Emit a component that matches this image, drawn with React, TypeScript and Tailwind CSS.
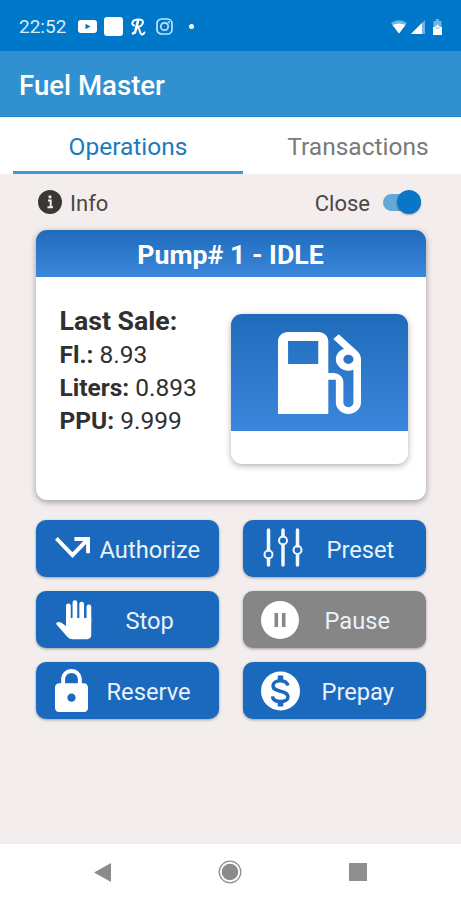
import type { ReactNode } from 'react'
import clsx from 'clsx'

function StatusBar() {
  return (
    <div className="flex h-[51px] items-center justify-between bg-[#0078c9] pt-[2px] pr-[18px] pl-[19px] text-white">
      <div className="flex items-center">
        <span className="w-[59px] text-[19px] leading-none text-[#d8ecf9]">22:52</span>
        <svg width="19" height="13" viewBox="0 0 19 13">
          <rect width="19" height="13" rx="3" fill="#fff" />
          <path d="M7.5 3.7v5.6l5-2.8z" fill="#0078c9" />
        </svg>
        <div className="ml-[7px] size-[19px] rounded-[3px] bg-white" />
        <svg className="ml-[8px]" width="15" height="18" viewBox="0 0 15 18" fill="none" stroke="#fff" strokeLinecap="round">
          <path d="M3 7.5C0 6.5 1 2.5 5 1.8C10 .8 12.5 2 11.8 5C11 8 8 9 5.5 9" strokeWidth="2" />
          <path d="M7 3L4 14.5M2 15.5L4 14" strokeWidth="2.6" />
          <path d="M6.5 9.5C9 9.5 8.5 16.5 11 16.5C12 16.5 13 15.5 13.5 14.5" strokeWidth="2" />
        </svg>
        <svg className="ml-[10px]" width="17" height="17" viewBox="0 0 17 17" fill="none" stroke="#c6e2f5" strokeWidth="1.7">
          <rect x="1" y="1" width="15" height="15" rx="4.5" />
          <circle cx="8.5" cy="8.5" r="3.7" />
          <circle cx="12.7" cy="4.3" r=".4" />
        </svg>
        <div className="ml-[16px] size-[5px] rounded-full bg-white" />
      </div>
      <div className="flex items-center">
        <svg width="16" height="14" viewBox="0 0 16 14">
          <path d="M0 3Q8-2.5 16 3L8 13.5z" fill="#70b4e2" />
          <path d="M1.5 5Q8 1.8 14.5 5L8 13.5z" fill="#fff" />
        </svg>
        <svg className="ml-[4px]" width="14" height="14" viewBox="0 0 14 14">
          <path d="M0 14L14 0v14z" fill="#70b4e2" />
          <path d="M0 14L11 3V14z" fill="#fff" />
        </svg>
        <svg className="mr-px ml-[8px]" width="9" height="16" viewBox="0 0 9 16">
          <path d="M3 0h3v2h2.5v6h-8V2H3z" fill="#70b4e2" />
          <path d="M0 8h2L4.5 5.5 7 8h2v8H0z" fill="#fff" />
          <path d="M2.5 9h4" stroke="#70b4e2" />
        </svg>
      </div>
    </div>
  )
}

function PumpIcon() {
  return (
    <svg width="83" height="82" viewBox="4 3 16.5 18" preserveAspectRatio="none" fill="#fff">
      <path d="M19.77 7.23l.01-.01-3.72-3.72L15 4.56l2.11 2.11c-.94.36-1.61 1.26-1.61 2.33 0 1.38 1.12 2.5 2.5 2.5.36 0 .69-.08 1-.21v7.21c0 .55-.45 1-1 1s-1-.45-1-1V14c0-1.1-.9-2-2-2h-1V5c0-1.1-.9-2-2-2H6c-1.1 0-2 .9-2 2v16h10v-7.5h1.5v5c0 1.38 1.12 2.5 2.5 2.5s2.5-1.12 2.5-2.5V9c0-.69-.28-1.32-.73-1.77zM12 10H6V5h6v5zm6 0c-.55 0-1-.45-1-1s.45-1 1-1 1 .45 1 1-.45 1-1 1z" />
    </svg>
  )
}

function AuthorizeIcon() {
  return (
    <svg width="35" height="21" viewBox="3 7 18 10.41" preserveAspectRatio="none" fill="#fff">
      <path d="M3 8.41l9 9 7-7V15h2V7h-8v2h4.59L12 14.59 4.41 7 3 8.41z" />
    </svg>
  )
}

function PresetIcon() {
  return (
    <svg width="40" height="39" viewBox="0 0 40 39" fill="none" stroke="#f2f8fd" strokeLinecap="round">
      <path d="M5.5 2v20M5.5 31v6M20 2v6M20 17v20M34.5 2v16M34.5 27v10" strokeWidth="3.5" />
      <circle cx="5.5" cy="26.5" r="4" strokeWidth="2" />
      <circle cx="20" cy="12.5" r="4" strokeWidth="2" />
      <circle cx="34.5" cy="22" r="4" strokeWidth="2" />
    </svg>
  )
}

function StopIcon() {
  return (
    <svg width="36" height="40" viewBox="0 0 36 40" fill="#fff">
      <path d="M12.4 5.8V22M18.9 2.7V22M25.7 4V22M32.9 6.8V22" stroke="#fff" strokeWidth="4.7" strokeLinecap="round" />
      <path d="M10.05 18H35.25V34.5Q35.25 39.3 30.5 39.3H16.5Q13.5 39.3 11.5 37L.5 24.5Q-.3 23.2 1 22.5Q3 21.4 5 22.6L10.05 26z" />
    </svg>
  )
}

function PauseIcon() {
  return (
    <svg width="38" height="38" viewBox="0 0 38 38">
      <circle cx="19" cy="19" r="19" fill="#fff" />
      <path d="M15.3 12v14M22.7 12v14" stroke="#868686" strokeWidth="3.6" />
    </svg>
  )
}

function ReserveIcon() {
  return (
    <svg width="33" height="43" viewBox="4 1 16 21" preserveAspectRatio="none" fill="#fff">
      <path d="M18 8h-1V6c0-2.76-2.24-5-5-5S7 3.24 7 6v2H6c-1.1 0-2 .9-2 2v10c0 1.1.9 2 2 2h12c1.1 0 2-.9 2-2V10c0-1.1-.9-2-2-2zm-6 9c-1.1 0-2-.9-2-2s.9-2 2-2 2 .9 2 2-.9 2-2 2zm3.1-9H8.9V6c0-1.71 1.39-3.1 3.1-3.1 1.71 0 3.1 1.39 3.1 3.1v2z" />
    </svg>
  )
}

function PrepayIcon() {
  return (
    <svg width="39" height="40" viewBox="0 0 39 40" fill="none" stroke="#1b69bd">
      <circle cx="19.5" cy="20" r="19.5" fill="#fff" stroke="none" />
      <path d="M27 14.5C26 11 23 9.7 19.5 9.7C15 9.7 12 11.7 12 14.8C12 18 14.5 19 19.5 20.2C24.5 21.3 27 22.7 27 25.7C27 28.7 24 30.5 19.5 30.5C15 30.5 12 28.7 11.3 25.3" strokeWidth="3.5" />
      <path d="M19.5 4.5v5M19.5 30.5v5" strokeWidth="5.5" />
    </svg>
  )
}

type Action = { label: string; icon: ReactNode; iconClass: string; labelClass: string; disabled?: boolean }

const actions: Action[] = [
  { label: 'Authorize', icon: <AuthorizeIcon />, iconClass: 'pl-[19px] -mt-[3px]', labelClass: 'w-[100px]' },
  { label: 'Preset', icon: <PresetIcon />, iconClass: 'pl-[20px] -mt-[2px]', labelClass: 'w-[68px] mr-[12px]' },
  { label: 'Stop', icon: <StopIcon />, iconClass: 'pl-[20px]', labelClass: 'w-[49px] mr-[25px]' },
  { label: 'Pause', icon: <PauseIcon />, iconClass: 'pl-[18px]', labelClass: 'w-[66px] mr-[16px]', disabled: true },
  { label: 'Reserve', icon: <ReserveIcon />, iconClass: 'pl-[19px]', labelClass: 'w-[84px] mr-[9px]' },
  { label: 'Prepay', icon: <PrepayIcon />, iconClass: 'pl-[18px]', labelClass: 'w-[72px] mr-[13px]' },
]

function PumpCard() {
  return (
    <div className="mx-auto mt-[2px] h-[270px] w-[390px] overflow-hidden rounded-[11px] bg-white shadow-[0_2px_6px_rgba(0,0,0,0.35)]">
      <div className="flex h-[47px] items-center justify-center bg-linear-to-b from-[#1f6bbb] to-[#3b87dc] pt-[3px] text-[26.7px] font-bold text-white">
        Pump# 1 - IDLE
      </div>
      <div className="flex justify-between pr-[18px] pl-[24px]">
        <div className="pt-[28px] text-[24.5px] leading-[33px] whitespace-nowrap text-[#303030]">
          <div className="text-[26.7px] font-bold">Last Sale:</div>
          <div><b>Fl.:</b> 8.93</div>
          <div><b>Liters:</b> 0.893</div>
          <div><b>PPU:</b> 9.999</div>
        </div>
        <div className="mt-[37px] h-[150px] w-[177px] overflow-hidden rounded-[11px] bg-white shadow-[0_2px_6px_rgba(0,0,0,0.3)]">
          <div className="flex h-[117px] items-center justify-center bg-linear-to-b from-[#1f6bbb] to-[#3b87dc]">
            <PumpIcon />
          </div>
        </div>
      </div>
    </div>
  )
}

export default function App() {
  return (
    <div className="flex h-[900px] w-[461px] flex-col overflow-hidden bg-[#f3eded] font-['Roboto',sans-serif]">
      <StatusBar />
      <div className="flex h-[66px] items-center border-b border-[#2a83c4] bg-[#3090d0] pt-[5px] pl-[19px] text-[27.6px] font-medium text-white">
        Fuel Master
      </div>
      <div className="flex h-[57px] bg-white pl-[13px] text-[24.5px] whitespace-nowrap">
        <div className="flex w-[230px] shrink-0 items-center justify-center border-b-[3px] border-[#4398cf] pt-[6px] text-[#1c7bbd]">
          Operations
        </div>
        <div className="flex w-[230px] shrink-0 items-center justify-center border-b-[3px] border-white pt-[6px] text-[#7a7a7a]">
          Transactions
        </div>
      </div>
      <div className="flex h-[54px] items-center justify-between pt-[2px] pr-[40px] pl-[38px] text-[22px] text-[#4a4646]">
        <div className="flex items-center">
          <svg width="24" height="24" viewBox="0 0 24 24">
            <circle cx="12" cy="12" r="12" fill="#3b3737" />
            <path d="M10 10.5h2.7V17M9.5 17.2h5.5" fill="none" stroke="#f3eded" strokeWidth="2" />
            <rect x="10.6" y="5.5" width="2.8" height="2.8" fill="#f3eded" />
          </svg>
          <span className="mt-[2px] ml-[8px]">Info</span>
        </div>
        <div className="flex items-center">
          <span className="mt-[2px] mr-[13px]">Close</span>
          <div className="flex h-[17px] w-[38px] items-center justify-end rounded-full bg-[#64a7d8]">
            <div className="size-[24px] shrink-0 rounded-full bg-[#0976c8] shadow-[0_1px_2px_rgba(0,0,0,0.3)]" />
          </div>
        </div>
      </div>
      <PumpCard />
      <div className="mx-auto mt-[20px] grid w-[390px] grid-cols-[183px_183px] justify-between gap-y-[14px]">
        {actions.map((action) => (
          <button
            key={action.label}
            className={clsx(
              'flex h-[57px] items-center justify-between rounded-[10px] pr-[19px] text-[23.7px] whitespace-nowrap text-[#e9f2fb] shadow-[0_1px_3px_rgba(0,0,0,0.35)]',
              action.disabled ? 'bg-[#868686]' : 'bg-[#1b69bd]',
            )}
          >
            <span className={action.iconClass}>{action.icon}</span>
            <span className={clsx('mt-[5px] text-left', action.labelClass)}>{action.label}</span>
          </button>
        ))}
      </div>
      <div className="mt-auto flex h-[56px] items-center justify-between bg-white pr-[94px] pl-[94px]">
        <svg width="17" height="19" viewBox="0 0 17 19">
          <path d="M0 9.5L17 0v19z" fill="#8b8b8b" />
        </svg>
        <svg width="24" height="24" viewBox="0 0 24 24">
          <circle cx="12" cy="12" r="10.8" fill="none" stroke="#8f8f8f" strokeWidth="1.3" />
          <circle cx="12" cy="12" r="8.3" fill="#8b8b8b" />
        </svg>
        <div className="size-[18px] bg-[#8f8f8f]" />
      </div>
    </div>
  )
}
